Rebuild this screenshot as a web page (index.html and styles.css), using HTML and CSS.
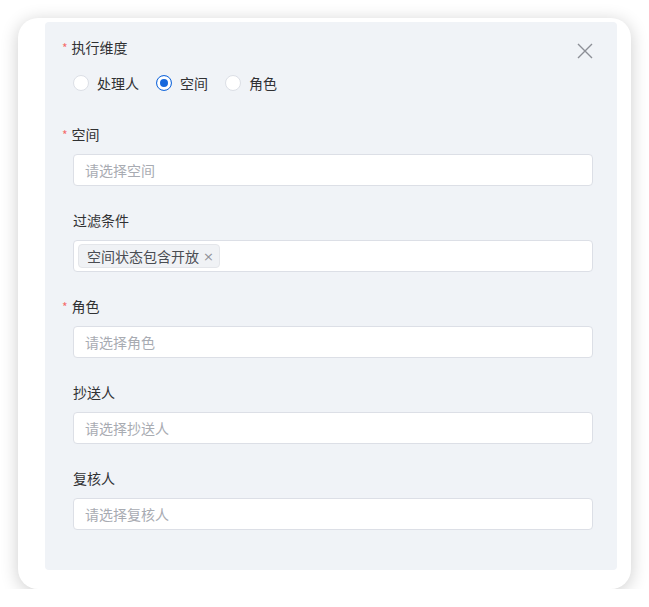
FILE: index.html
```html
<!DOCTYPE html>
<html lang="zh">
<head>
<meta charset="utf-8">
<title>表单</title>
<link rel="stylesheet" href="styles.css">
</head>
<body>
<div class="card">
  <div class="panel">
    <button class="close" aria-label="关闭">
      <svg width="16" height="16" viewBox="0 0 16 16"><path d="M1 1L15 15M15 1L1 15" stroke="#8c8f96" stroke-width="1.4" fill="none"/></svg>
    </button>
    <div class="item first">
      <div class="label req">执行维度</div>
      <div class="radios">
        <label class="radio"><span class="dot"></span><span>处理人</span></label>
        <label class="radio on"><span class="dot"></span><span>空间</span></label>
        <label class="radio"><span class="dot"></span><span>角色</span></label>
      </div>
    </div>
    <div class="item">
      <div class="label req">空间</div>
      <div class="input"><span class="ph">请选择空间</span></div>
    </div>
    <div class="item">
      <div class="label">过滤条件</div>
      <div class="input tags"><span class="tag">空间状态包含开放<span class="x">×</span></span></div>
    </div>
    <div class="item">
      <div class="label req">角色</div>
      <div class="input"><span class="ph">请选择角色</span></div>
    </div>
    <div class="item">
      <div class="label">抄送人</div>
      <div class="input"><span class="ph">请选择抄送人</span></div>
    </div>
    <div class="item">
      <div class="label">复核人</div>
      <div class="input"><span class="ph">请选择复核人</span></div>
    </div>
  </div>
</div>
</body>
</html>
```
FILE: styles.css
```css
* { box-sizing: border-box; }
html, body { margin: 0; padding: 0; background: #fff; }
body {
  font-family: "Noto Sans CJK SC", "Noto Sans", sans-serif;
  font-size: 14px;
  color: #303133;
  padding: 18px 0 0 18px;
}
.card {
  width: 613px;
  height: 571px;
  background: #fff;
  border-radius: 20px;
  box-shadow: 0 3px 18px rgba(0,0,0,0.2);
  padding: 4px 14px 19px 27px;
}
.panel {
  position: relative;
  height: 548px;
  background: #f0f3f7;
  border-radius: 4px;
  padding: 14px 24px 0 28px;
}
.close {
  position: absolute;
  top: 21px;
  right: 24px;
  width: 16px;
  height: 16px;
  padding: 0;
  border: 0;
  background: none;
  display: block;
}
.close svg { display: block; }
.item { margin-bottom: 23px; }
.item.first { margin-bottom: 24px; }
.label {
  line-height: 22px;
  height: 22px;
  margin-bottom: 9px;
  color: #303133;
}
.label.req { margin-left: -1px; }
.label.req::before {
  content: "*";
  color: #f56c6c;
  margin-left: -10px;
  margin-right: 4px;
  font-size: 12px;
}
.radios {
  height: 32px;
  display: flex;
  align-items: center;
  gap: 17px;
}
.radio {
  display: flex;
  align-items: center;
  gap: 8px;
  color: #303133;
}
.dot {
  width: 16px;
  height: 16px;
  border-radius: 50%;
  border: 1px solid #dcdfe6;
  background: #fff;
  display: block;
}
.radio.on .dot {
  border-color: #1668dc;
  box-shadow: inset 0 0 0 3px #fff, inset 0 0 0 8px #1668dc;
}
.input {
  height: 32px;
  border: 1px solid #dcdfe6;
  border-radius: 4px;
  background: #fff;
  padding: 0 11px;
  display: flex;
  align-items: center;
}
.ph { color: #a8abb2; }
.input.tags { padding: 0 4px; }
.tag {
  height: 24px;
  display: flex;
  align-items: center;
  padding: 0 5px 0 8px;
  background: #f0f2f5;
  border: 1px solid #e4e6ea;
  border-radius: 4px;
  color: #4a4d52;
}
.x {
  margin-left: 4px;
  color: #909399;
  font-size: 13px;
  font-family: "DejaVu Sans", sans-serif;
}
```
